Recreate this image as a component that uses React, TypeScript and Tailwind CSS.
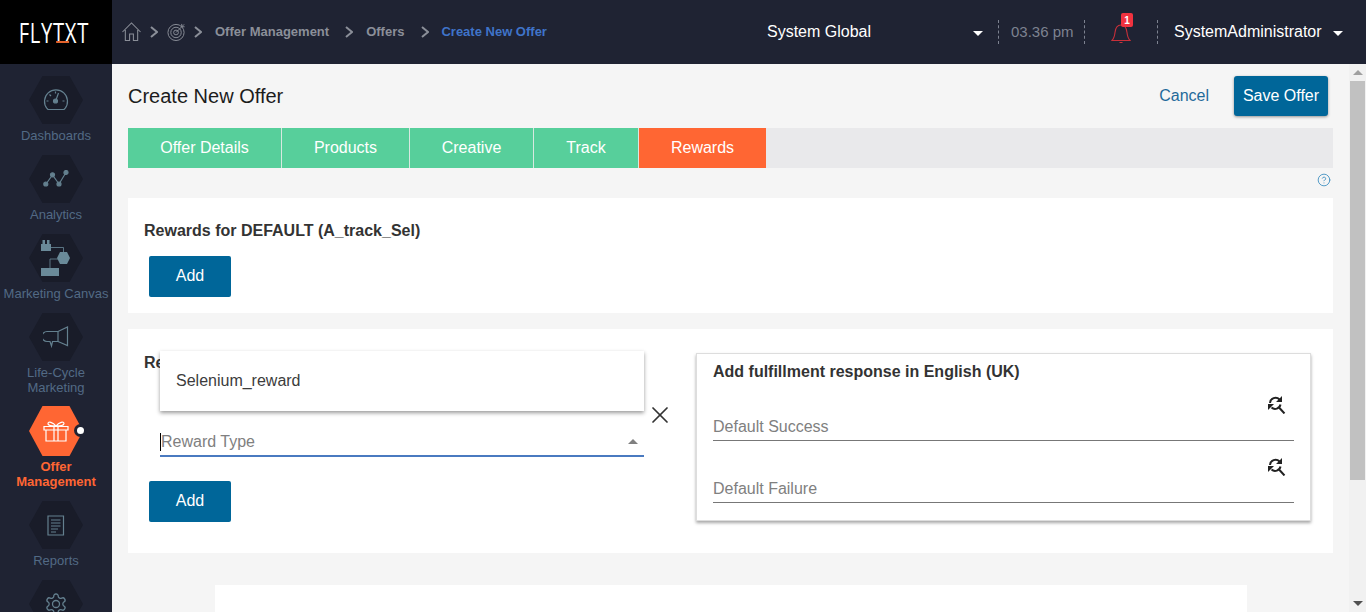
import React from 'react';
import { X, CircleHelp } from 'lucide-react';

const HEX = '[clip-path:polygon(25%_0,75%_0,100%_50%,75%_100%,25%_100%,0_50%)]';

const Gauge = () => (
  <svg width="26" height="24" viewBox="0 0 26 24" fill="none" stroke="#64808f" strokeWidth="1.2">
    <path d="M5 21.500h16l1-1a11.500 11.500 0 1 0-18 0z" />
    <circle cx="12.500" cy="13" r="2" fill="#64808f" />
    <path d="M13 12l2.500-7M3.500 13h2M19.500 13h2M6.500 6.500l1.500 1.500M12.500 3.500v2" />
  </svg>
);

const LineChart = () => (
  <svg width="26" height="18" viewBox="0 0 26 18" fill="#64808f" stroke="#64808f" strokeWidth="1.2">
    <path d="M3 14l6.500-9 6.500 9 7-11.500" fill="none" />
    <circle cx="2.800" cy="14" r="2" />
    <circle cx="9.500" cy="4.800" r="2" />
    <circle cx="16" cy="14" r="2" />
    <circle cx="23" cy="2.500" r="2" />
  </svg>
);

const Canvas = () => (
  <svg width="30" height="36" viewBox="0 0 30 36" fill="#6a8a99">
    <path d="M0 4h10v7H0zM1.500 0h2.500v4H1.500zM6 0h2.500v4H6z" />
    <path d="M10 7.500h12.500v5M9 28v-9h8" fill="none" stroke="#6a8a99" strokeWidth="0.8" />
    <path d="M19 12h7l3 6-3 6h-7l-3-6z" />
    <path d="M0 28h18v8H0z" />
  </svg>
);

const Megaphone = () => (
  <svg width="26" height="22" viewBox="0 0 26 22" fill="none" stroke="#64808f" strokeWidth="1.2">
    <path d="M15 5.500H4a3.500 3.500 0 0 0 0 10h3l1.500 4.500 1-4.500H15z" />
    <path d="M15 5.500L24.500 1v18.500L15 15.500" />
  </svg>
);

const Gift = () => (
  <svg width="26" height="21" viewBox="0 0 26 21" fill="none" stroke="#fff" strokeWidth="1.2">
    <path d="M1 5.500h24v3.500H1zM3 9v11h20V9M11 5.500V20M15 5.500V20" />
    <path d="M13 5C10 1 5 0 5 2.500S9 5 13 5zM13 5c3-4 8-5 8-2.500S17 5 13 5z" />
  </svg>
);

const Report = () => (
  <svg width="18" height="21" viewBox="0 0 18 21" fill="none" stroke="#64808f" strokeWidth="1.200">
    <path d="M1 1h15.500v19H1zM4 5h9.500M4 8h9.500M4 11h9.500M4 14h7M4 17h5" />
  </svg>
);

const Gear = () => (
  <svg width="24" height="24" viewBox="0 0 24 24" fill="none" stroke="#64808f" strokeWidth="1.300">
    <path d="M12.220 2h-.44a2 2 0 0 0-2 2v.180a2 2 0 0 1-1 1.730l-.43.250a2 2 0 0 1-2 0l-.15-.08a2 2 0 0 0-2.730.730l-.22.380a2 2 0 0 0 .730 2.730l.15.100a2 2 0 0 1 1 1.720v.510a2 2 0 0 1-1 1.740l-.15.090a2 2 0 0 0-.730 2.730l.22.380a2 2 0 0 0 2.730.730l.15-.08a2 2 0 0 1 2 0l.43.250a2 2 0 0 1 1 1.730V20a2 2 0 0 0 2 2h.44a2 2 0 0 0 2-2v-.180a2 2 0 0 1 1-1.730l.43-.250a2 2 0 0 1 2 0l.15.080a2 2 0 0 0 2.730-.730l.22-.390a2 2 0 0 0-.730-2.730l-.15-.08a2 2 0 0 1-1-1.740v-.500a2 2 0 0 1 1-1.740l.15-.09a2 2 0 0 0 .730-2.730l-.22-.380a2 2 0 0 0-2.730-.730l-.15.080a2 2 0 0 1-2 0l-.43-.250a2 2 0 0 1-1-1.730V4a2 2 0 0 0-2-2z" />
    <circle cx="12" cy="12" r="3.500" />
  </svg>
);

const SearchRefresh = () => (
  <svg width="18" height="18" viewBox="0 0 18 18" fill="none" stroke="#222" strokeWidth="2">
    <path d="M2 7a5.500 5.500 0 0 1 9.500-3.500M12.500 8.500A5.500 5.500 0 0 1 3.500 11.500M11.500 12l5 5.500" />
    <path d="M14 0v6H8zM0 14V8h6z" fill="#222" stroke="none" />
  </svg>
);

const Crumb = ({ className }: { className: string }) => (
  <svg className={className} width="8" height="12" viewBox="0 0 8 12" fill="none" stroke="#8b8f99" strokeWidth="2">
    <path d="M1 1l6 5-6 5" />
  </svg>
);

const Caret = ({ up = false, color = 'border-white' }: { up?: boolean; color?: string }) => (
  <span
    className={
      'inline-block h-0 w-0 border-x-[5px] border-x-transparent ' +
      (up ? 'border-b-[5px] ' : 'border-t-[5px] ') +
      color
    }
  />
);

const navItems = [
  { key: 'dashboards', label: ['Dashboards'], icon: <Gauge />, spacing: 'mb-3' },
  { key: 'analytics', label: ['Analytics'], icon: <LineChart />, spacing: 'mb-3' },
  { key: 'canvas', label: ['Marketing Canvas'], icon: <Canvas />, spacing: 'mb-3' },
  { key: 'lifecycle', label: ['Life-Cycle', 'Marketing'], icon: <Megaphone />, spacing: 'mb-[11px]' },
  { key: 'offers', label: ['Offer', 'Management'], icon: <Gift />, spacing: 'mb-3', active: true },
  { key: 'reports', label: ['Reports'], icon: <Report />, spacing: 'mb-3' },
  { key: 'settings', label: [], icon: <Gear />, spacing: 'mb-3' },
];

const tabs = [
  { name: 'Offer Details', width: 'w-[154px]' },
  { name: 'Products', width: 'w-[128px]' },
  { name: 'Creative', width: 'w-[124px]' },
  { name: 'Track', width: 'w-[105px]' },
];

const Divider = () => <div className="h-[24px] border-l border-dashed border-[#7d8290]" />;

const AddButton = () => (
  <button className="flex h-[41px] w-[82px] items-center justify-center rounded-[2px] bg-[#006699] pb-[1px] text-[16px] text-white">
    Add
  </button>
);

const ResponseField = ({ label }: { label: string }) => (
  <div className="relative h-[62px] border-b border-[#777]">
    <span className="absolute bottom-[4px] left-0 text-[16px] leading-[18px] text-[#808080]">{label}</span>
    <span className="absolute right-[8px] top-[17px]">
      <SearchRefresh />
    </span>
  </div>
);

export default function App() {
  return (
    <div className="flex h-screen flex-col overflow-hidden bg-[#f5f5f5] font-['Liberation_Sans',Arial,sans-serif]">
      {/* Top bar */}
      <header className="flex h-16 shrink-0 items-center bg-[#1f2333]">
        <div className="flex h-full w-[112px] shrink-0 items-center justify-center bg-black pr-[5px]">
          <span className="relative scale-x-[0.72] font-['Open_Sans',sans-serif] text-[28px] leading-none tracking-[1px] text-white">
            FLYTXT
            <span className="absolute bottom-[3px] left-[52px] h-[2px] w-[18px] bg-[#e2622b]" />
          </span>
        </div>

        <div className="ml-[10px] flex w-[645px] shrink-0 items-center text-[13px] font-bold text-[#8b8f99]">
          <svg width="19" height="22" viewBox="0 0 20 22" fill="none" stroke="#8b8f99" strokeWidth="1.100">
            <path d="M0.500 11L10 1.500 19.500 11M3.500 9v11h4.500v-7h4v7h4.500V9" />
          </svg>
          <Crumb className="ml-[9px]" />
          <svg className="ml-[9px]" width="19" height="20" viewBox="0 0 20 20" fill="none" stroke="#8b8f99" strokeWidth="1">
            <circle cx="9.500" cy="10.500" r="8.500" />
            <circle cx="9.500" cy="10.500" r="5.500" />
            <circle cx="9.500" cy="10.500" r="2.500" />
            <path d="M9.500 10.500L18 2M15.500 1.500v3h3" />
          </svg>
          <Crumb className="ml-[8px]" />
          <span className="ml-[13px]">Offer Management</span>
          <Crumb className="ml-[16px]" />
          <span className="ml-[13px]">Offers</span>
          <Crumb className="ml-[17px]" />
          <span className="ml-[12px] text-[#3f74c9]">Create New Offer</span>
        </div>

        <div className="flex w-[217px] shrink-0 items-center justify-between text-[16px] text-white">
          <span>System Global</span>
          <span className="mr-[1px] mt-[2px] flex">
            <Caret />
          </span>
        </div>
        <div className="ml-[14px] flex items-center">
          <Divider />
          <span className="ml-[12px] w-[62px] whitespace-nowrap text-[15px] text-[#7d8290]">03.36 pm</span>
          <span className="ml-[11px]">
            <Divider />
          </span>
          <span className="relative ml-[26px] flex">
            <svg width="20" height="24" viewBox="0 0 20 24" fill="none" stroke="#c8303a" strokeWidth="1.100">
              <path d="M1 20.500c2-2 2.500-3.500 3-8 .5-5 2.500-7.500 6-7.500s5.500 2.500 6 7.500c.5 4.500 1 6 3 8zM8.500 22.500h3" />
            </svg>
            <span className="absolute left-[10px] top-[-7px] flex h-[14px] w-[12px] items-center justify-center rounded-[2px] bg-[#f0323f] text-[10px] font-bold text-white">
              1
            </span>
          </span>
          <span className="ml-[26px]">
            <Divider />
          </span>
          <span className="ml-[16px] text-[16px] text-white">SystemAdministrator</span>
          <span className="ml-[11px] mt-[2px] flex">
            <Caret />
          </span>
        </div>
      </header>

      <div className="flex min-h-0 flex-1">
        {/* Side nav */}
        <nav className="flex w-[112px] shrink-0 flex-col items-center overflow-hidden bg-[#1f2333] pt-3">
          {navItems.map((item) => (
            <div key={item.key} className={'flex w-full shrink-0 flex-col items-center ' + item.spacing}>
              <div className="relative">
                <div
                  className={
                    'flex w-[54px] items-center justify-center ' +
                    HEX +
                    (item.active ? ' h-[50px] bg-[#ff6633]' : ' h-[48px] bg-[#191c29]')
                  }
                >
                  {item.icon}
                </div>
                {item.active && (
                  <span className="absolute right-[-4px] top-[18px] flex h-[13px] w-[13px] items-center justify-center rounded-full bg-[#1f2333]">
                    <span className="h-[7px] w-[7px] rounded-full bg-white" />
                  </span>
                )}
              </div>
              <div
                className={
                  'whitespace-nowrap text-center text-[13px] leading-[15px] ' +
                  (item.active ? 'mt-[3px] font-bold text-[#ff6633]' : 'mt-1 text-[#526a85]')
                }
              >
                {item.label.map((line) => (
                  <div key={line}>{line}</div>
                ))}
              </div>
            </div>
          ))}
        </nav>

        {/* Main */}
        <main className="min-w-0 flex-1 overflow-hidden pl-4 pr-4">
          <div className="flex h-[64px] items-start justify-between pr-[5px] pt-3">
            <h1 className="mt-[8px] text-[20px] leading-[24px] text-[#1c1c1c]">Create New Offer</h1>
            <div className="flex items-center">
              <span className="text-[16px] text-[#1f6a9a]">Cancel</span>
              <button className="ml-[25px] h-[40px] w-[94px] rounded-[3px] bg-[#006699] text-[16px] text-white shadow-[0_1px_3px_rgba(0,0,0,0.4)]">
                Save Offer
              </button>
            </div>
          </div>

          <div className="flex h-[40px] bg-[#e9e9eb] text-[16px] text-white">
            {tabs.map((tab) => (
              <div key={tab.name} className={'flex items-center justify-center border-r border-[#d8e8e0] bg-[#57cf9b] ' + tab.width}>
                {tab.name}
              </div>
            ))}
            <div className="flex w-[127px] items-center justify-center bg-[#ff6633]">Rewards</div>
          </div>

          <div className="flex h-[30px] items-start justify-end pr-[2px] pt-[5px]">
            <CircleHelp className="h-[14px] w-[14px] text-[#3f8fc0]" strokeWidth={1.500} />
          </div>

          <section className="h-[115px] bg-white pl-4 pt-[23px]">
            <h2 className="text-[16px] font-bold leading-[19px] text-[#333]">Rewards for DEFAULT (A_track_Sel)</h2>
            <div className="ml-[5px] mt-[16px]">
              <AddButton />
            </div>
          </section>

          <section className="relative mt-4 flex h-[224px] bg-white pl-4 pt-[24px]">
            <div className="w-[552px] shrink-0">
              <h2 className="text-[16px] font-bold leading-[19px] text-[#333]">Rewards</h2>
              <div className="ml-4 mr-[52px] mt-[52px] flex h-[33px] items-center justify-between border-b-2 border-[#4a7ac0] pb-[2px] pr-[6px] pt-[6px]">
                <span className="border-l border-black text-[16px] leading-[18px] text-[#808080]">Reward Type</span>
                <Caret up color="border-b-[#808080]" />
              </div>
              <div className="ml-[5px] mt-[24px]">
                <AddButton />
              </div>
            </div>

            <div className="h-[168px] w-[615px] border border-[#ddd] bg-white px-4 pt-[8px] shadow-[0_2px_3px_rgba(0,0,0,0.35)]">
              <h3 className="h-[17px] text-[16px] font-bold leading-[19px] text-[#333]">Add fulfillment response in English (UK)</h3>
              <ResponseField label="Default Success" />
              <ResponseField label="Default Failure" />
            </div>

            {/* open dropdown of the reward type select */}
            <div className="absolute left-[32px] top-[22px] flex h-[60px] w-[484px] items-center bg-white pl-4 text-[16px] text-[#3c3c3c] shadow-[0_2px_4px_rgba(0,0,0,0.4)]">
              Selenium_reward
            </div>
            <X className="absolute left-[518px] top-[72px] h-[28px] w-[28px] text-[#333]" strokeWidth={1.500} />
          </section>

          <div className="ml-[87px] mr-[86px] mt-8 h-[200px] bg-white" />
        </main>

        {/* Scrollbar */}
        <div className="flex w-[17px] shrink-0 flex-col items-center bg-[#f1f1f1]">
          <div className="flex h-[17px] items-center">
            <Caret up color="border-b-[#a0a0a0]" />
          </div>
          <div className="h-[399px] w-[15px] bg-[#c1c1c1]" />
          <div className="mt-auto flex h-[17px] items-center">
            <Caret color="border-t-[#505050]" />
          </div>
        </div>
      </div>
    </div>
  );
}
